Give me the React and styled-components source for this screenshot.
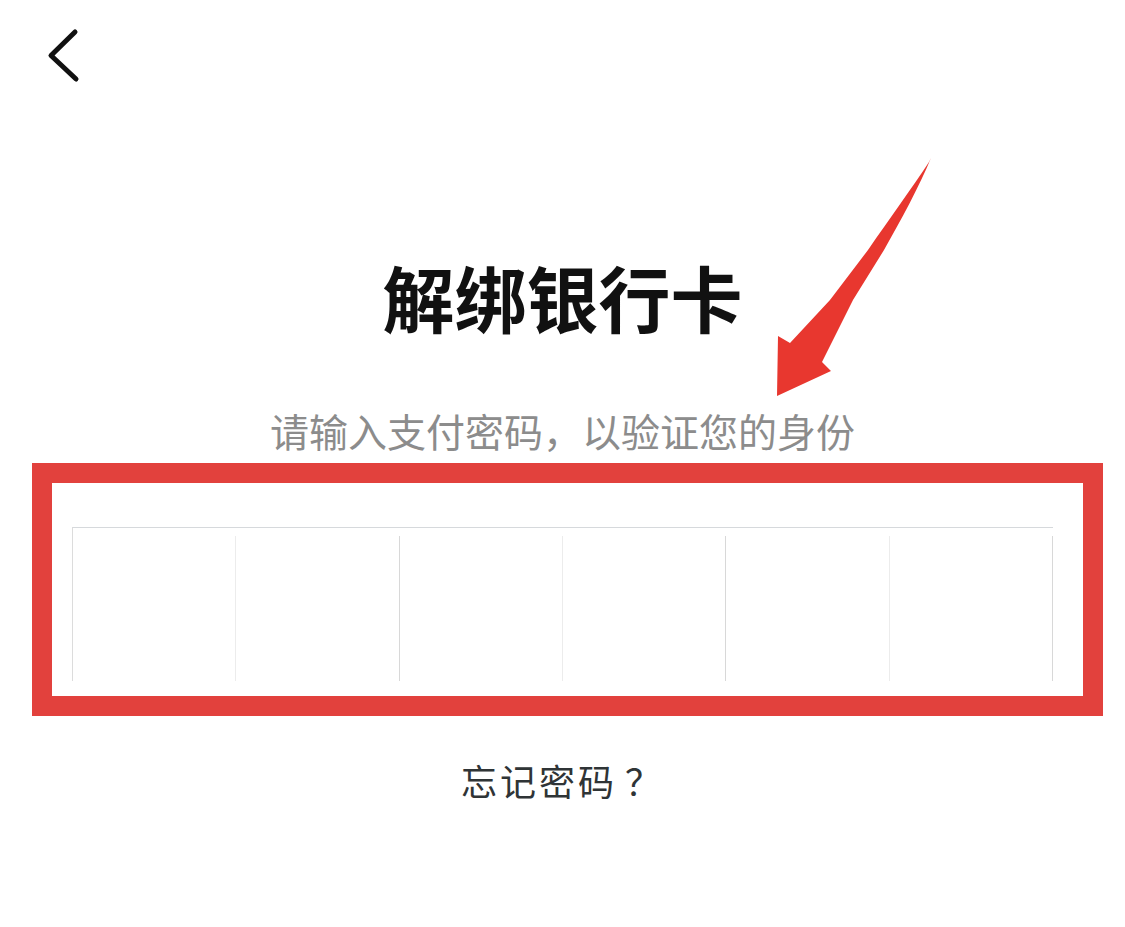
import React from "react";
import styled, { createGlobalStyle } from "styled-components";

const GlobalStyle = createGlobalStyle`
  html, body {
    margin: 0;
    padding: 0;
    background: #ffffff;
  }
  body {
    font-family: "Noto Sans CJK SC", "Noto Sans", sans-serif;
  }
  #root {
    min-height: 100vh;
  }
`;

const Page = styled.div`
  position: relative;
  width: 1125px;
  height: 927px;
  overflow: hidden;
  display: flex;
  flex-direction: column;
  align-items: center;
  background: #fff;
`;

const TopBar = styled.div`
  align-self: stretch;
  height: 110px;
  display: flex;
  align-items: flex-start;
  padding: 26px 0 0 44px;
  box-sizing: border-box;
`;

const BackButton = styled.button`
  border: none;
  background: transparent;
  padding: 0;
  margin: 0;
  width: 40px;
  height: 60px;
  cursor: pointer;
  display: block;
`;

const Title = styled.h1`
  margin: 150px 0 0;
  font-size: 72px;
  line-height: 72px;
  font-weight: 700;
  color: #111;
  letter-spacing: 0;
`;

const Subtitle = styled.p`
  margin: 79px 0 0;
  font-size: 39px;
  line-height: 39px;
  font-weight: 400;
  color: #8c8c8c;
`;

const Highlight = styled.div`
  margin: 13px 0 0 10px;
  width: 1071px;
  height: 253px;
  box-sizing: border-box;
  border: 20px solid #e2413d;
  padding: 44px 30px 16px 20px;
`;

const CodeGrid = styled.div`
  display: grid;
  grid-template-columns: repeat(6, 1fr);
  height: 153px;
  border-top: 1px solid #d6d9dc;
  border-left: 1px solid #dcdcdc;
`;

const CodeCell = styled.div`
  border-right: 1px solid ${(p) => (p.$faint ? "#ececec" : "#d8d8d8")};
  margin-top: 8px;
`;

const ForgotLink = styled.a`
  margin-top: 44px;
  font-size: 36px;
  line-height: 40px;
  letter-spacing: 3px;
  color: #2f3436;
  text-decoration: none;
`;

const Question = styled.span`
  margin-left: 8px;
`;

const Annotation = styled.svg`
  position: absolute;
  left: 770px;
  top: 150px;
  width: 170px;
  height: 255px;
  pointer-events: none;
`;

export default function App() {
  const faint = [true, false, true, false, true, false];
  return (
    <>
      <GlobalStyle />
      <Page>
        <TopBar>
          <BackButton aria-label="返回">
            <svg width="40" height="60" viewBox="44 26 40 60">
              <polyline
                points="75,32 51,55.5 76,79"
                fill="none"
                stroke="#111"
                strokeWidth="5"
                strokeLinecap="round"
                strokeLinejoin="round"
              />
            </svg>
          </BackButton>
        </TopBar>
        <Title>解绑银行卡</Title>
        <Subtitle>请输入支付密码，以验证您的身份</Subtitle>
        <Highlight>
          <CodeGrid>
            {faint.map((f, i) => (
              <CodeCell key={i} $faint={f} />
            ))}
          </CodeGrid>
        </Highlight>
        <ForgotLink href="#">
          忘记密码<Question>？</Question>
        </ForgotLink>
        <Annotation viewBox="0 0 170 255">
          <path
            d="M161 8 C150 35 130 72 114 100 L83 150 L52 212 L61 221 L7 246 L8 186 L20 193 L60 150 L98 100 C120 68 142 38 159 12 Z"
            fill="#e8372f"
          />
        </Annotation>
      </Page>
    </>
  );
}
